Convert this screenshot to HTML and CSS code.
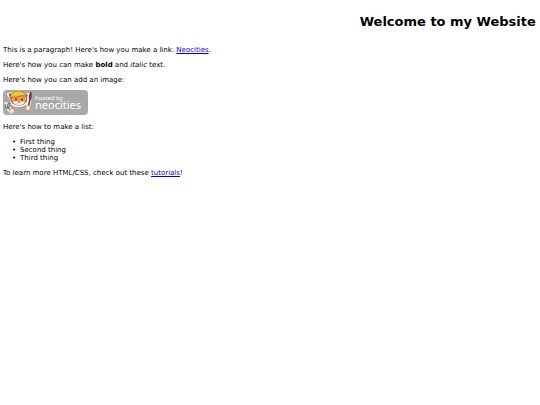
FILE: index.html
```html
<!DOCTYPE html>
<html lang="en">
<head>
<meta charset="utf-8">
<title>Welcome to my Website</title>
<link rel="stylesheet" href="styles.css">
</head>
<body>
<h1 class="banner"><span class="banner-text">Welcome to my Website</span></h1>
<p>This is a paragraph! Here's how you make a link: <a href="#neocities">Neocities</a>.</p>
<p>Here's how you can make <strong>bold</strong> and <em>italic</em> text.</p>
<p>Here's how you can add an image:</p>
<svg class="badge" viewBox="0 0 85 25" role="img" aria-label="Hosted by Neocities">
  <rect width="85" height="25" rx="4" fill="#a9a9a9"/>
  <g stroke-linecap="round" stroke-linejoin="round">
    <path d="M8 10 5 4l5-1Q16-1 22 4l3 0 0 6q-2 6-9 6T8 11Z" fill="#fff" stroke="#fff" stroke-width="2"/>
    <path d="M8 9 6 4l5 0q6-3 10 1l3-1v6q-2 5-8 5T8 11Z" fill="#ef9a50" stroke="#6b3b1c" stroke-width=".8"/>
    <path d="M7 8Q8 1 15 1q7 0 9 5-7-1-10 1-4 0-7 1Z" fill="#efbd31" stroke="#94601b" stroke-width=".7"/>
    <path d="M11 4q4-2 8 0" fill="none" stroke="#ffdc60" stroke-width=".8"/>
    <path d="M10 12q3-2 6 0 3-1 6 0-1 3-6 3-5 0-6-3Z" fill="#fff3db"/>
    <path d="M13 9v1m6-1v1" stroke="#37251f" stroke-width="1.3"/>
    <path d="m15 12 2 0-1 1Z" fill="#752b22"/>
    <path d="m3 14 5 8" stroke="#fff" stroke-width="4"/>
    <path d="m5 17 3 5M2 14l1 4 3 0 0-5M4 14l1 4" fill="none" stroke="#5d5d5d" stroke-width="1"/>
    <path d="m27 5-2 12" stroke="#fff" stroke-width="4"/>
    <path d="m27 9-2 9" stroke="#683326" stroke-width="1.5"/>
    <path d="M26 8q0-4 2-6 1 4 0 7Z" fill="#a83135" stroke="#512526" stroke-width=".7"/>
    <circle cx="9" cy="21" r="2.5" fill="#fff5df" stroke="#c58b48" stroke-width=".8"/>
    <circle cx="25" cy="18" r="2.5" fill="#fff5df" stroke="#c58b48" stroke-width=".8"/>
  </g>
  <text class="badge-small" x="32" y="10">hosted by</text>
  <text class="badge-name" x="32" y="19">neocities</text>
</svg>
<p>Here's how to make a list:</p>
<ul>
  <li>First thing</li>
  <li>Second thing</li>
  <li>Third thing</li>
</ul>
<p>To learn more HTML/CSS, check out these <a href="#tutorials">tutorials</a>!</p>
</body>
</html>
```
FILE: styles.css
```css
body {
  margin: 13px 3px 3px;
  background: #fff;
  color: #000;
  font-family: "DejaVu Sans", sans-serif;
  font-size: 7px;
  line-height: 8px;
}

.banner {
  margin: 0 0 16px;
  padding-left: 66.8%;
  overflow: hidden;
  white-space: nowrap;
  font-size: 14px;
  line-height: 17px;
}

.banner-text {
  font-size: 13px;
}

p {
  margin: 0 0 7px;
}

a {
  color: #0000ee;
}

.badge {
  display: block;
  width: 85px;
  height: 25px;
  margin: -1px 0 8px;
}

.badge-small,
.badge-name {
  fill: #fff;
  font-family: "Noto Sans", sans-serif;
}

.badge-small {
  font-size: 6px;
}

.badge-name {
  font-size: 11px;
}

ul {
  margin: 0 0 7px;
  padding-left: 17px;
  list-style: none;
}

li {
  position: relative;
}

li::before {
  content: "•";
  position: absolute;
  left: -8px;
}
```
